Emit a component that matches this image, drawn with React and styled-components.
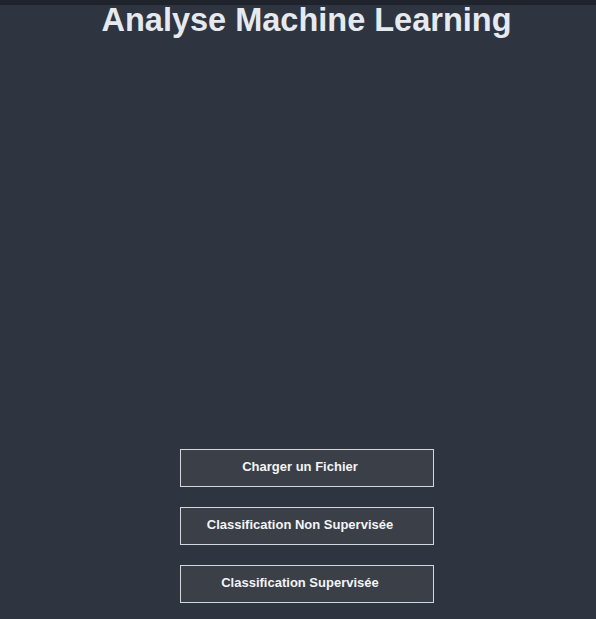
import React from 'react'
import styled, { createGlobalStyle } from 'styled-components'

const GlobalStyle = createGlobalStyle`
  html, body {
    margin: 0;
    padding: 0;
    background: #2e3440;
    overflow: hidden;
  }
  body {
    font-family: "Liberation Sans", Arial, sans-serif;
  }
`

const TopBar = styled.div`
  height: 5px;
  background: #1f232b;
`

const Page = styled.div`
  display: flex;
  flex-direction: column;
  align-items: center;
  padding-left: 17px;
  height: 614px;
  box-sizing: border-box;
`

const Title = styled.h1`
  margin: 0;
  font-size: 32.5px;
  line-height: 30px;
  font-weight: bold;
  color: #e5e9f0;
`

const PlotArea = styled.div`
  height: 414px;
  width: 100%;
`

const Actions = styled.div`
  display: flex;
  flex-direction: column;
  gap: 20px;
`

const Button = styled.button`
  width: 254px;
  height: 38px;
  box-sizing: border-box;
  padding: 0 13px 3px 0;
  background: #3b3f47;
  border: 1px solid #d4d7dc;
  border-radius: 0;
  color: #f2f4f7;
  font-family: "Liberation Sans", Arial, sans-serif;
  font-size: 13px;
  font-weight: bold;
  text-align: center;
  cursor: pointer;
`

export default function App() {
  return (
    <>
      <GlobalStyle />
      <TopBar />
      <Page>
        <Title>Analyse Machine Learning</Title>
        <PlotArea />
        <Actions>
          <Button>Charger un Fichier</Button>
          <Button>Classification Non Supervisée</Button>
          <Button>Classification Supervisée</Button>
        </Actions>
      </Page>
    </>
  )
}
